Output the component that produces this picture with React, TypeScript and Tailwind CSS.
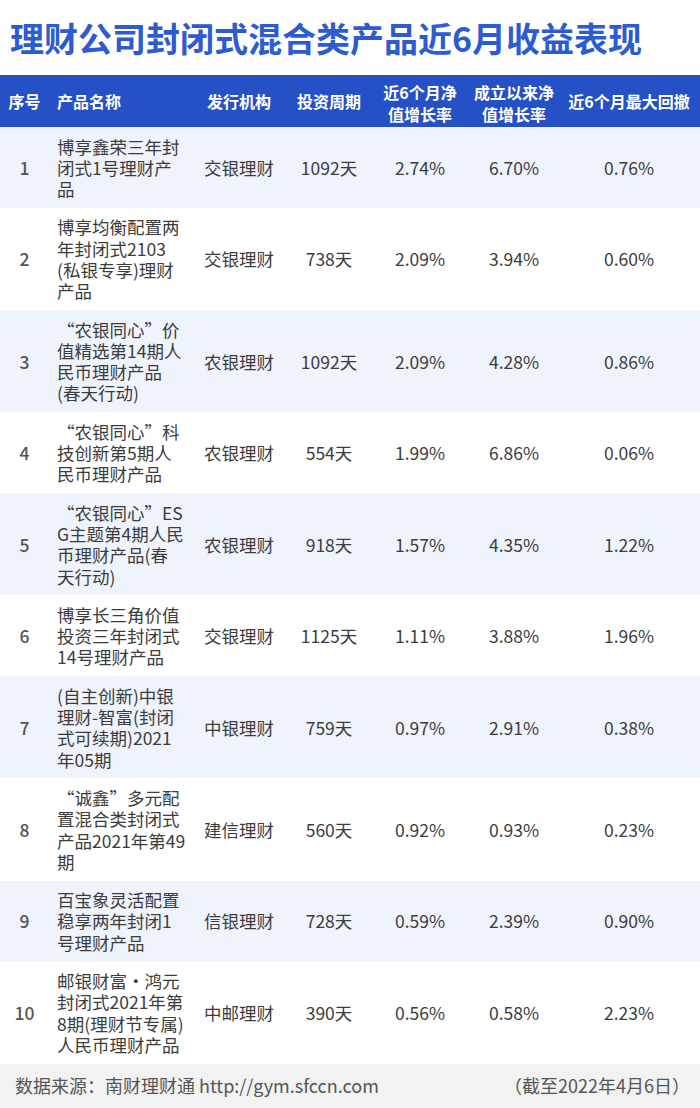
import React from "react";

type Row = {
  no: number;
  name: string[];
  org: string;
  term: string;
  r6m: string;
  since: string;
  drawdown: string;
};

const rows: Row[] = [
  { no: 1, name: ["博享鑫荣三年封", "闭式1号理财产", "品"], org: "交银理财", term: "1092天", r6m: "2.74%", since: "6.70%", drawdown: "0.76%" },
  { no: 2, name: ["博享均衡配置两", "年封闭式2103", "(私银专享)理财", "产品"], org: "交银理财", term: "738天", r6m: "2.09%", since: "3.94%", drawdown: "0.60%" },
  { no: 3, name: ["“农银同心”价", "值精选第14期人", "民币理财产品", "(春天行动)"], org: "农银理财", term: "1092天", r6m: "2.09%", since: "4.28%", drawdown: "0.86%" },
  { no: 4, name: ["“农银同心”科", "技创新第5期人", "民币理财产品"], org: "农银理财", term: "554天", r6m: "1.99%", since: "6.86%", drawdown: "0.06%" },
  { no: 5, name: ["“农银同心”ES", "G主题第4期人民", "币理财产品(春", "天行动)"], org: "农银理财", term: "918天", r6m: "1.57%", since: "4.35%", drawdown: "1.22%" },
  { no: 6, name: ["博享长三角价值", "投资三年封闭式", "14号理财产品"], org: "交银理财", term: "1125天", r6m: "1.11%", since: "3.88%", drawdown: "1.96%" },
  { no: 7, name: ["(自主创新)中银", "理财-智富(封闭", "式可续期)2021", "年05期"], org: "中银理财", term: "759天", r6m: "0.97%", since: "2.91%", drawdown: "0.38%" },
  { no: 8, name: ["“诚鑫”多元配", "置混合类封闭式", "产品2021年第49", "期"], org: "建信理财", term: "560天", r6m: "0.92%", since: "0.93%", drawdown: "0.23%" },
  { no: 9, name: ["百宝象灵活配置", "稳享两年封闭1", "号理财产品"], org: "信银理财", term: "728天", r6m: "0.59%", since: "2.39%", drawdown: "0.90%" },
  { no: 10, name: ["邮银财富·鸿元", "封闭式2021年第", "8期(理财节专属)", "人民币理财产品"], org: "中邮理财", term: "390天", r6m: "0.56%", since: "0.58%", drawdown: "2.23%" },
];

const cols = "grid grid-cols-[49px_141px_98px_82px_100px_88px_142px] items-center";

export default function App() {
  return (
    <div
      className="w-[700px] h-[1108px] bg-white overflow-hidden"
      style={{ fontFamily: '"Noto Sans CJK SC", "Noto Sans", sans-serif' }}
    >
      <h1 className="h-[75px] flex items-center pl-[10px] text-[34px] font-bold text-[#2c5bd2]">
        理财公司封闭式混合类产品近6月收益表现
      </h1>

      <div className={`${cols} h-[52px] bg-[#2550c6] text-white text-[16px] font-bold leading-[22px]`}>
        <div className="text-center">序号</div>
        <div className="pl-2">产品名称</div>
        <div className="text-center">发行机构</div>
        <div className="text-center">投资周期</div>
        <div className="text-center pt-1">近6个月净<br />值增长率</div>
        <div className="text-center pt-1">成立以来净<br />值增长率</div>
        <div className="text-center">近6个月最大回撤</div>
      </div>

      {rows.map((row, i) => (
        <div
          key={row.no}
          className={`${cols} py-[8.5px] text-[17.5px] leading-[21.3px] text-[#3c3c3c] ${i % 2 === 0 ? "bg-[#eff3fc]" : "bg-white"}`}
        >
          <div className="text-center text-[#555] font-medium">{row.no}</div>
          <div className="pl-2 whitespace-nowrap">
            {row.name.map((line) => (
              <div key={line}>{line}</div>
            ))}
          </div>
          <div className="text-center">{row.org}</div>
          <div className="text-center">{row.term}</div>
          <div className="text-center">{row.r6m}</div>
          <div className="text-center">{row.since}</div>
          <div className="text-center">{row.drawdown}</div>
        </div>
      ))}

      <div className="h-[44px] bg-[#f2f2f2] flex items-center justify-between pl-[15px] pr-[10px] text-[18px] text-[#555]">
        <span>数据来源：南财理财通 http://gym.sfccn.com</span>
        <span>（截至2022年4月6日）</span>
      </div>
    </div>
  );
}
